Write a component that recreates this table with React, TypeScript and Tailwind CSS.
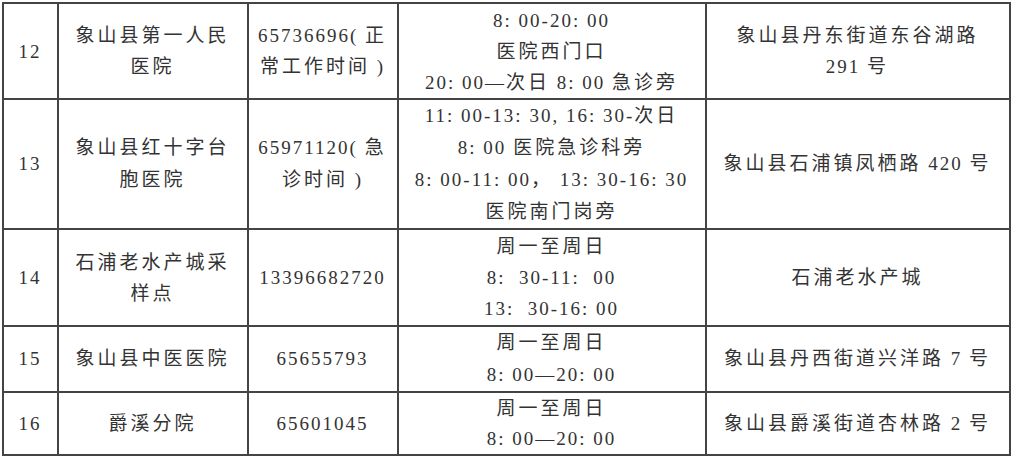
import React from 'react';

interface Row {
  no: string;
  name: string[];
  phone: string[];
  time: string[];
  address: string[];
  h: string;
}

const rows: Row[] = [
  {
    no: '12',
    name: ['象山县第一人民', '医院'],
    phone: ['65736696( 正', '常工作时间 )'],
    time: ['8: 00-20: 00', '医院西门口', '20: 00—次日 8: 00 急诊旁'],
    address: ['象山县丹东街道东谷湖路', '291 号'],
    h: 'h-[96px] leading-[31px]',
  },
  {
    no: '13',
    name: ['象山县红十字台', '胞医院'],
    phone: ['65971120( 急', '诊时间 )'],
    time: ['11: 00-13: 30, 16: 30-次日', '8: 00 医院急诊科旁', '8: 00-11: 00， 13: 30-16: 30', '医院南门岗旁'],
    address: ['象山县石浦镇凤栖路 420 号'],
    h: 'h-[130px] leading-[32px]',
  },
  {
    no: '14',
    name: ['石浦老水产城采', '样点'],
    phone: ['13396682720'],
    time: ['周一至周日', '8:  30-11:  00', '13:  30-16: 00'],
    address: ['石浦老水产城'],
    h: 'h-[97px] leading-[31px]',
  },
  {
    no: '15',
    name: ['象山县中医医院'],
    phone: ['65655793'],
    time: ['周一至周日', '8: 00—20: 00'],
    address: ['象山县丹西街道兴洋路 7 号'],
    h: 'h-[66px] leading-[32px]',
  },
  {
    no: '16',
    name: ['爵溪分院'],
    phone: ['65601045'],
    time: ['周一至周日', '8: 00—20: 00'],
    address: ['象山县爵溪街道杏林路 2 号'],
    h: 'h-[63px] leading-[30px]',
  },
];

// CJK runs get wider tracking than digits, as in the printed table
const Text: React.FC<{ s: string }> = ({ s }) => (
  <>
    {s.split(/([\u4e00-\u9fff\uff00-\uffef]+)/).map((part, i) =>
      /[\u4e00-\u9fff\uff00-\uffef]/.test(part) ? (
        <span key={i} className="tracking-[3px]">
          {part}
        </span>
      ) : (
        <span key={i}>{part}</span>
      )
    )}
  </>
);

const Lines: React.FC<{ lines: string[] }> = ({ lines }) => (
  <>
    {lines.map((l, i) => (
      <div key={i} className="whitespace-pre">
        <Text s={l} />
      </div>
    ))}
  </>
);

const cell = 'border-2 border-[#444] text-center align-middle p-0';

export default function App() {
  return (
    <div className="w-[1012px] h-[458px] bg-white overflow-hidden pt-[2px] pl-[1.5px]">
      <table className="table-fixed border-collapse w-[1007px] font-['Liberation_Serif','Noto_Sans_CJK_SC',serif] text-[19px] tracking-[2px] text-[#333]">
        <colgroup>
          <col className="w-[55px]" />
          <col className="w-[190px]" />
          <col className="w-[150px]" />
          <col className="w-[308px]" />
          <col className="w-[304px]" />
        </colgroup>
        <tbody>
          {rows.map((r) => (
            <tr key={r.no} className={r.h}>
              <td className={cell}>{r.no}</td>
              <td className={cell}>
                <Lines lines={r.name} />
              </td>
              <td className={cell}>
                <Lines lines={r.phone} />
              </td>
              <td className={cell}>
                <Lines lines={r.time} />
              </td>
              <td className={cell}>
                <Lines lines={r.address} />
              </td>
            </tr>
          ))}
        </tbody>
      </table>
    </div>
  );
}
